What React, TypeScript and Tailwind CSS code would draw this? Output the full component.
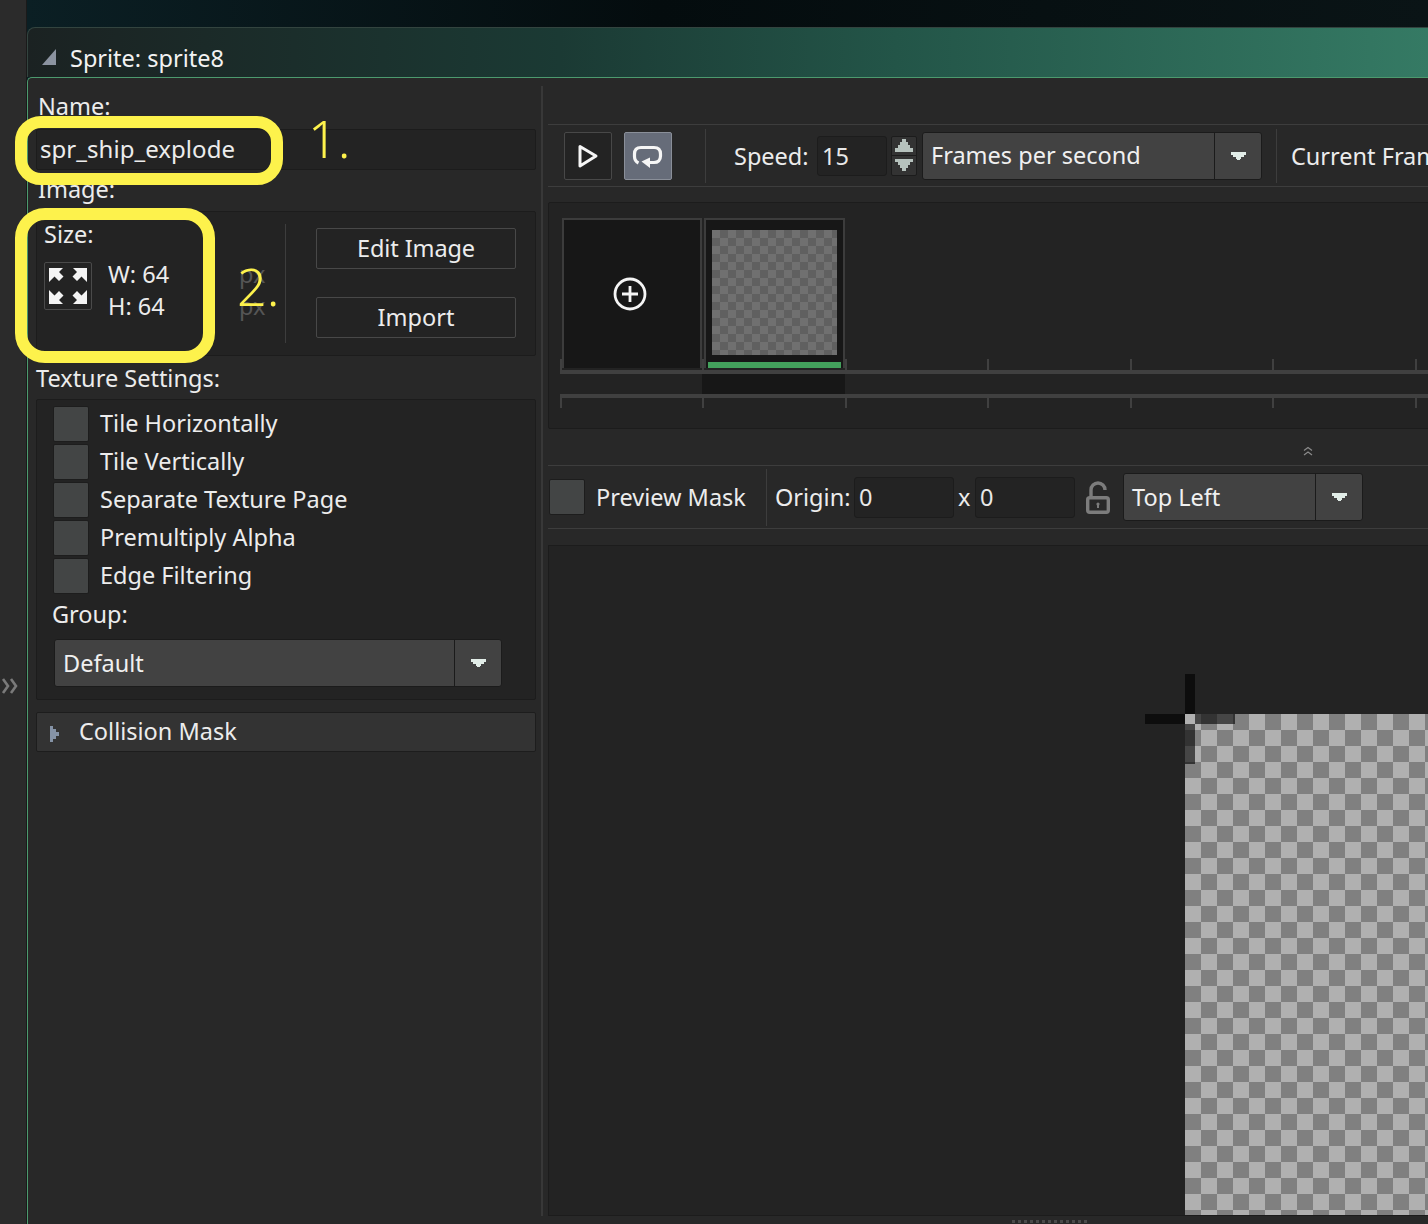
import type { ReactNode } from 'react';

const TEXTURE_OPTIONS = [
  'Tile Horizontally',
  'Tile Vertically',
  'Separate Texture Page',
  'Premultiply Alpha',
  'Edge Filtering',
];

const TICKS = [0, 1, 2, 3, 4, 5, 6];

function DropArrow(): ReactNode {
  return (
    <svg width="15" height="8" viewBox="0 0 15 8" shapeRendering="crispEdges">
      <path d="M0 0h15v3h-2v2h-3v2H9v1H6V7H5V5H2V3H0z" fill="#e2ede8" />
    </svg>
  );
}

function Select({ label, width, arrow = 47 }: { label: string; width: number; arrow?: number }): ReactNode {
  return (
    <div
      className="flex h-12 shrink-0 items-stretch rounded-[3px] border border-[#1b1b1b] bg-[#424242] leading-none text-[#f0f0f0]"
      style={{ width }}
    >
      <div className="flex flex-1 items-center pl-2 pt-[1px]">{label}</div>
      <div className="flex items-center justify-center border-l border-[#1b1b1b]" style={{ width: arrow }}>
        <DropArrow />
      </div>
    </div>
  );
}

function Checkbox(): ReactNode {
  return <div className="h-9 w-9 shrink-0 rounded-[2px] border border-[#1d1d1d] bg-[#434545]" />;
}

function NumberInput({ value, width, height }: { value: string; width: number; height: number }): ReactNode {
  return (
    <div
      className="flex shrink-0 items-center rounded-[3px] border border-[#1c1c1c] bg-[#232323] pl-1 text-[#e8e8e8]"
      style={{ width, height }}
    >
      {value}
    </div>
  );
}

function ExpandIcon(): ReactNode {
  const arrow = 'M4 5H18L14 9L18.5 13.5L14 18L9.5 13.5L4 19Z';
  return (
    <svg width="46" height="46" viewBox="0 0 46 46" fill="#f4f4f4">
      <path d={arrow} />
      <path d={arrow} transform="matrix(-1 0 0 1 46 0)" />
      <path d={arrow} transform="matrix(1 0 0 -1 0 46)" />
      <path d={arrow} transform="matrix(-1 0 0 -1 46 46)" />
    </svg>
  );
}

function PlayIcon(): ReactNode {
  return (
    <svg width="46" height="46" viewBox="0 0 46 46" fill="none" stroke="#f6f6f6" strokeWidth="3" strokeLinejoin="round">
      <path d="M15 13.5 31 23 15 33Z" />
    </svg>
  );
}

function LoopIcon(): ReactNode {
  return (
    <svg width="46" height="46" viewBox="0 0 46 46" fill="none">
      <path
        d="M13.5 30C10.5 28.5 9.5 26 9.5 23.5V21C9.5 16.5 12 14.5 16 14.5H29C33 14.5 35.5 16.5 35.5 21V23C35.5 27 33 29.5 29 29.5H24"
        stroke="#f6f6f6"
        strokeWidth="3.2"
      />
      <path d="M16.5 28.5 25 24.5V35Z" fill="#f6f6f6" />
    </svg>
  );
}

function PlusCircleIcon(): ReactNode {
  return (
    <svg width="34" height="34" viewBox="0 0 34 34" fill="none" stroke="#f4f4f4" strokeWidth="2.8">
      <circle cx="17" cy="17" r="15" />
      <path d="M9 17H25M17 9V25" />
    </svg>
  );
}

function LockIcon(): ReactNode {
  return (
    <svg width="24" height="33" viewBox="0 0 24 33" fill="none" stroke="#7c7c7c" strokeWidth="3.4" className="shrink-0">
      <rect x="1.7" y="16.7" width="20.6" height="14.6" rx="2" />
      <path d="M5 15V9a7 7 0 0 1 14 0" />
      <circle cx="12" cy="23" r="1.6" fill="#7c7c7c" stroke="none" />
      <path d="M12 23v4" strokeWidth="2" />
    </svg>
  );
}

function Spinner(): ReactNode {
  return (
    <div className="flex h-10 w-[26px] shrink-0 flex-col rounded-[2px] border border-[#1c1c1c] bg-[#333333]">
      <div className="flex flex-1 items-center justify-center border-b border-[#1c1c1c]">
        <svg width="18" height="13" viewBox="0 0 18 13" shapeRendering="crispEdges">
          <path d="M7 0h4v3h2v3h2v3h3v4H0V9h3V6h2V3h2z" fill="#b6c2bd" />
        </svg>
      </div>
      <div className="flex flex-1 items-center justify-center">
        <svg width="18" height="12" viewBox="0 0 18 12" shapeRendering="crispEdges">
          <path d="M0 0h18v3h-3v3h-2v3h-2v3H7V9H5V6H3V3H0z" fill="#b6c2bd" />
        </svg>
      </div>
    </div>
  );
}

function VDivider({ className }: { className: string }): ReactNode {
  return <div className={`w-px shrink-0 bg-[#3d3d3d] ${className}`} />;
}

function TickRow({ className }: { className: string }): ReactNode {
  return (
    <div className={`flex ${className}`}>
      {TICKS.map((t) => (
        <div key={t} className="h-full w-[142.49px] shrink-0 border-l-2 border-[#404040]" />
      ))}
    </div>
  );
}

function LeftPanel(): ReactNode {
  return (
    <div className="flex w-[513px] shrink-0 flex-col pl-2 pr-[5px]">
      <div className="mt-[13px] h-[30px] pl-[2px] leading-[30px]">Name:</div>
      <div className="mt-2 flex h-[41px] items-center rounded-[2px] border border-[#1c1c1c] bg-[#232323] pb-[2px] pl-[2px] text-[24px] tracking-[0.05px]">
        <span className="ml-[1px]">spr_ship_explode</span>
      </div>
      <div className="mt-[5px] h-[30px] pl-[2px] leading-[28px]">Image:</div>
      <div className="mt-[6px] flex h-[145px] rounded-[2px] border border-[#1c1c1c] bg-[#232323]">
        <div className="w-[202px] shrink-0 pl-[7px]">
          <div className="mt-[7px] h-[30px] leading-[30px]">Size:</div>
          <div className="mt-[13px] flex">
            <div className="flex h-12 w-12 shrink-0 items-center justify-center rounded-[2px] border border-[#4a4a4a]">
              <ExpandIcon />
            </div>
            <div className="ml-4 mt-[-4px] leading-8">
              <div>W: 64</div>
              <div>H: 64</div>
            </div>
          </div>
        </div>
        <div className="mt-[46px] w-[46px] shrink-0 leading-8 text-[#555555]">
          <div>px</div>
          <div>px</div>
        </div>
        <VDivider className="my-3" />
        <div className="ml-[30px] mt-[16px] flex w-[200px] shrink-0 flex-col gap-7">
          <div className="flex h-[41px] items-center justify-center rounded-[2px] border border-[#484848] pb-[2px] tracking-[-0.1px]">
            Edit Image
          </div>
          <div className="flex h-[41px] items-center justify-center rounded-[2px] border border-[#484848] pb-[2px]">Import</div>
        </div>
      </div>
      <div className="mt-2 h-[30px] leading-[28px]">Texture Settings:</div>
      <div className="mt-[5px] h-[301px] rounded-[2px] border border-[#1c1c1c] bg-[#232323] pl-4 pt-[6px]">
        <div className="flex flex-col gap-[2px]">
          {TEXTURE_OPTIONS.map((opt) => (
            <div key={opt} className="flex items-center gap-[11px]">
              <Checkbox />
              <span className="-mt-[2px]">{opt}</span>
            </div>
          ))}
        </div>
        <div className="-ml-[1px] mt-[3px] h-[34px] leading-[34px]">Group:</div>
        <div className="ml-[1px] mt-[8px]">
          <Select label="Default" width={448} />
        </div>
      </div>
      <div className="mt-3 flex h-10 items-center rounded-[2px] border border-[#1d1d1d] bg-[#333333]">
        <svg width="10" height="16" viewBox="0 0 10 16" shapeRendering="crispEdges" className="ml-[13px] mt-1 shrink-0">
          <path d="M0 0h3v3h3v3h3v4H6v3H3v3H0z" fill="#8593a6" />
        </svg>
        <span className="-mt-[2px] ml-[19px]">Collision Mask</span>
      </div>
    </div>
  );
}

function Timeline(): ReactNode {
  return (
    <div className="h-[227px] shrink-0 rounded-[2px] border border-[#1c1c1c] bg-[#232323] pl-[11px] pt-[15px]">
      <div className="ml-[2px] flex h-[152px] items-start gap-[2px]">
        <div className="flex h-[150px] w-[140px] shrink-0 items-center justify-center border-2 border-b-0 border-[#3c3c3c] bg-[#171717]">
          <div className="-ml-[4px] flex">
            <PlusCircleIcon />
          </div>
        </div>
        <div className="flex h-[150px] w-[141px] shrink-0 flex-col items-center border-2 border-b-0 border-[#3c3c3c] bg-[#171717]">
          <div className="mt-[10px] h-[125px] w-[125px] bg-[conic-gradient(#606060_25%,#707070_0_50%,#606060_0_75%,#707070_0)] bg-[length:16px_16px]" />
          <div className="mt-auto h-[6px] w-[133px] bg-[#43a15c]" />
        </div>
      </div>
      <TickRow className="-mt-[11px] h-[11px]" />
      <div className="h-1 w-[1000px] bg-[#404040]" />
      <div className="ml-[142px] h-5 w-[143px] bg-[#171717]" />
      <div className="h-1 w-[1000px] bg-[#404040]" />
      <TickRow className="h-[10px]" />
    </div>
  );
}

function RightPanel(): ReactNode {
  return (
    <div className="flex min-w-0 flex-1 flex-col overflow-hidden pl-[5px]">
      <div className="h-[47px] shrink-0 border-b border-[#3d3d3d]" />
      <div className="flex h-[62px] shrink-0 items-center border-b border-[#3d3d3d] pl-[16px]">
        <div className="flex h-12 w-12 shrink-0 items-center justify-center rounded-[2px] border border-[#484848] bg-[#232323]">
          <PlayIcon />
        </div>
        <div className="ml-3 flex h-12 w-12 shrink-0 items-center justify-center rounded-[2px] border border-[#8a8f99] bg-[#666c79]">
          <LoopIcon />
        </div>
        <VDivider className="ml-[33px] h-[54px]" />
        <span className="ml-7 w-[75px] shrink-0">Speed:</span>
        <div className="ml-2">
          <NumberInput value="15" width={70} height={40} />
        </div>
        <div className="ml-1">
          <Spinner />
        </div>
        <div className="ml-[5px]">
          <Select label="Frames per second" width={340} />
        </div>
        <VDivider className="ml-[14px] h-[54px]" />
        <span className="ml-[14px] shrink-0 whitespace-nowrap">Current Frame</span>
      </div>
      <div className="mt-[15px] w-[900px] shrink-0">
        <Timeline />
      </div>
      <div className="flex h-[37px] shrink-0 items-center border-b border-[#3d3d3d] pl-[755px]">
        <svg width="10" height="10" viewBox="0 0 10 10" fill="none" stroke="#8a8a8a" strokeWidth="1.2" className="mt-[8px]">
          <path d="M1 4.5 5 1.5 9 4.5M1 9 5 6 9 9" />
        </svg>
      </div>
      <div className="flex h-[63px] shrink-0 items-center border-b border-[#3d3d3d] pl-[1px]">
        <Checkbox />
        <span className="ml-[11px] w-[152px] shrink-0">Preview Mask</span>
        <VDivider className="ml-[18px] h-[57px]" />
        <span className="ml-2 w-[74px] shrink-0">Origin:</span>
        <div className="ml-[5px]">
          <NumberInput value="0" width={100} height={41} />
        </div>
        <span className="ml-1 w-[13px] shrink-0">x</span>
        <div className="ml-[4px]">
          <NumberInput value="0" width={100} height={41} />
        </div>
        <div className="ml-[11px] flex">
          <LockIcon />
        </div>
        <div className="ml-[13px]">
          <Select label="Top Left" width={240} />
        </div>
      </div>
      <div className="relative mt-4 flex min-h-0 flex-1 flex-col border border-r-0 border-[#1c1c1c] bg-[#232323] pl-[636px] pt-[168px]">
        <div className="flex-1 bg-[conic-gradient(#808080_25%,#b0b0b0_0_50%,#808080_0_75%,#b0b0b0_0)] bg-[length:32px_32px]" />
        {/* origin crosshair */}
        <div className="absolute left-[636px] top-[128px] h-10 w-[10px] bg-[#0d0d0d]" />
        <div className="absolute left-[596px] top-[168px] h-[10px] w-10 bg-[#0d0d0d]" />
        <div className="absolute left-[646px] top-[168px] h-[10px] w-10 bg-black/60" />
        <div className="absolute left-[636px] top-[178px] h-10 w-[10px] bg-black/60" />
      </div>
      <div className="h-2 shrink-0 pl-[464px]">
        <div className="mt-1 h-[3px] w-[78px] bg-[repeating-linear-gradient(90deg,#4a4a4a_0_3px,transparent_3px_6px)]" />
      </div>
    </div>
  );
}

export default function App(): ReactNode {
  return (
    <div className="relative flex h-[1224px] w-[1428px] overflow-hidden bg-[#2b2b2b] font-['Noto_Sans',sans-serif] text-[23.5px] leading-8 text-[#ececec]">
      {/* collapsed side rail */}
      <div className="flex w-[27px] shrink-0 items-center border-r border-[#1a1a1a]">
        <svg width="18" height="16" viewBox="0 0 18 16" fill="none" stroke="#7a7a7a" strokeWidth="2.6" className="ml-[1px] mt-[148px]">
          <path d="M2 1l5 7-5 7M10 1l5 7-5 7" />
        </svg>
      </div>
      <div className="flex min-w-0 flex-1 flex-col bg-[linear-gradient(90deg,#0b1f24,#040c0e_45%,#0a1416)]">
        <div className="h-[27px] shrink-0" />
        <div className="flex h-[50px] shrink-0 items-center rounded-tl-lg border-l border-t border-[#33443f] bg-[linear-gradient(90deg,#1b2222,#1b3a34_38%,#235548_62%,#357a64)] pl-[14px] pt-[10px]">
          <svg width="14" height="16" viewBox="0 0 14 16" className="-mt-[2px] shrink-0">
            <path d="M14 0V16H0Z" fill="#8b93a0" />
          </svg>
          <span className="ml-[14px] text-[#f2f2f2]">Sprite: sprite8</span>
        </div>
        <div className="flex min-h-0 flex-1 rounded-tl-[5px] border-l border-t border-[#4c9a6e] bg-[#282828]">
          <LeftPanel />
          <div className="my-2 w-[2px] shrink-0 bg-[#383838]" />
          <RightPanel />
        </div>
      </div>
      {/* hand-drawn annotations on top of the screenshot */}
      <div className="absolute left-[15px] top-[116px] h-[69px] w-[268px] rounded-[26px] border-[12px] border-[#fdf24c]" />
      <div className="absolute left-[15px] top-[208px] h-[155px] w-[200px] rounded-[30px] border-[12px] border-[#fdf24c]" />
      <div className="absolute left-[308px] top-[106px] text-[52px] font-[350] leading-[64px] text-[#fdf24c]">1.</div>
      <div className="absolute left-[237px] top-[254px] text-[52px] font-[350] leading-[64px] text-[#fdf24c]">2.</div>
    </div>
  );
}
